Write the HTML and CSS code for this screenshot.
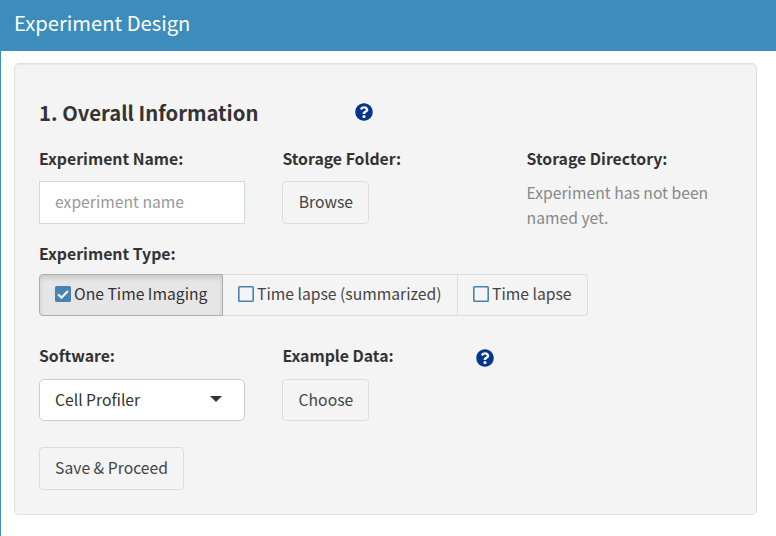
FILE: index.html
```html
<!DOCTYPE html>
<html lang="en">
<head>
<meta charset="utf-8">
<title>Experiment Design</title>
<link rel="stylesheet" href="styles.css">
</head>
<body>
<svg class="defs" aria-hidden="true">
  <symbol id="help" viewBox="0 0 512 512"><path d="M504 256c0 137-111 248-248 248S8 393 8 256 119 8 256 8s248 111 248 248zM262.700 90c-54.500 0-89.300 23-116.500 63.800-3.500 5.300-2.400 12.400 2.700 16.300l34.700 26.300c5.200 3.900 12.600 3 16.700-2.100 17.900-22.700 30.100-35.800 57.300-35.800 20.400 0 45.700 13.100 45.700 33 0 15-12.400 22.700-32.500 34C247.100 238.500 216 254.900 216 296v4c0 6.600 5.400 12 12 12h56c6.600 0 12-5.400 12-12v-1.300c0-28.500 83.200-29.600 83.200-106.700 0-58-60.200-102-116.500-102zM256 338c-25.400 0-46 20.600-46 46s20.600 46 46 46 46-20.600 46-46-20.600-46-46-46z"/></symbol>
</svg>
<div class="box">
  <header class="box-header"><h3>Experiment Design</h3></header>
  <main class="well">
    <div class="row title-row">
      <h4>1. Overall Information</h4>
      <svg class="help"><use href="#help"/></svg>
    </div>
    <div class="row row-name">
      <div>
        <label class="label" for="name">Experiment Name:</label>
        <input class="text-input" id="name" type="text" placeholder="experiment name">
      </div>
      <div>
        <div class="label">Storage Folder:</div>
        <button class="btn btn-short">Browse</button>
      </div>
      <div>
        <div class="label">Storage Directory:</div>
        <p class="hint">Experiment has not been<br>named yet.</p>
      </div>
    </div>
    <div class="row-type">
      <div class="label">Experiment Type:</div>
      <div class="btn-group">
        <button class="btn seg seg-one active"><svg class="check" viewBox="0 0 16 16"><rect width="16" height="16" rx="1.500" fill="#4682b4"/><path d="M3 8.200l3.500 3.400L13 5" fill="none" stroke="#eee" stroke-width="2.200"/></svg>One Time Imaging</button>
        <button class="btn seg seg-two"><svg class="check" viewBox="0 0 16 16"><rect x=".8" y=".8" width="14.400" height="14.400" rx=".8" fill="none" stroke="#4682b4" stroke-width="1.600"/></svg>Time lapse (summarized)</button>
        <button class="btn seg seg-three"><svg class="check" viewBox="0 0 16 16"><rect x=".8" y=".8" width="14.400" height="14.400" rx=".8" fill="none" stroke="#4682b4" stroke-width="1.600"/></svg>Time lapse</button>
      </div>
    </div>
    <div class="row row-software">
      <div>
        <div class="label">Software:</div>
        <button class="select">Cell Profiler<span class="caret"></span></button>
      </div>
      <div>
        <div class="label label-help"><span>Example Data:</span><svg class="help"><use href="#help"/></svg></div>
        <button class="btn btn-short">Choose</button>
      </div>
    </div>
    <button class="btn btn-save">Save &amp; Proceed</button>
  </main>
</div>
</body>
</html>
```
FILE: styles.css
```css
* { box-sizing: border-box; }
body {
  margin: 0;
  background: #fff;
  color: #333;
  font: 15.7px/24px "Source Sans Pro", "Noto Sans CJK SC", "Noto Sans", sans-serif;
}
h3, h4, p { margin: 0; }
button, input { font: inherit; margin: 0; }
.defs { display: none; }
.box { height: 536px; border-left: 1px solid #3c8dbc; overflow: hidden; }
.box-header { height: 51px; background: #3c8dbc; padding: 10px 13px; }
.box-header h3 { color: #fff; font-size: 20.2px; font-weight: 400; line-height: 26px; }
.well {
  width: 743px;
  height: 452px;
  margin: 12px 0 0 13px;
  padding: 34px 24px 0;
  background: #f4f4f4;
  border: 1px solid #e0e0e0;
  border-radius: 5px;
  box-shadow: inset 0 1px 1px rgba(0, 0, 0, .05);
}
.row { display: grid; grid-template-columns: 243.400px 244.200px 1fr; }
.title-row { height: 49px; grid-template-columns: 315.500px 1fr; }
h4 { font-size: 20.25px; font-weight: 700; line-height: 30px; }
.help { width: 18px; height: 18px; fill: #05358c; }
.title-row .help { margin-top: 5px; }
.label { display: block; height: 34px; font-size: 15.8px; font-weight: 700; line-height: 24px; }
.row-name { height: 95px; }
.text-input {
  display: block;
  width: 206px;
  height: 43px;
  padding: 0 15px 3px;
  border: 1px solid #d2d6de;
  background: #fff;
}
.text-input::placeholder { color: #999; opacity: 1; }
.btn {
  display: block;
  height: 43px;
  padding: 0 0 1px;
  border: 1px solid #ddd;
  border-radius: 4px;
  background: #f4f4f4;
  color: #444;
  white-space: nowrap;
}
.btn-short { width: 87px; }
.hint { margin-top: -1px; color: #888; line-height: 25px; }
.row-type { height: 102px; }
.row-type .label { height: 32px; }
.btn-group { display: flex; }
.seg { display: flex; align-items: center; height: 42px; padding: 0 0 3px 15px; border-radius: 0; }
.seg-one { width: 184px; border-radius: 4px 0 0 4px; }
.seg-two { width: 235px; border-left: 0; }
.seg-three { width: 130px; border-left: 0; border-radius: 0 4px 4px 0; }
.active { color: #333; background: #e6e6e6; border-color: #adadad; box-shadow: inset 0 3px 5px rgba(0, 0, 0, .125); }
.check { width: 16px; height: 16px; margin: 0 3px 0 0; flex: none; }
.row-software { height: 103px; }
.row-software .label { height: 35px; }
.row-software .btn { height: 42px; }
.label-help { display: flex; justify-content: space-between; width: 212px; }
.label-help .help { margin-top: 5px; }
.select {
  display: flex;
  align-items: center;
  justify-content: space-between;
  width: 206px;
  height: 42px;
  padding: 0 22px 0 15px;
  border: 1px solid #ccc;
  border-radius: 5px;
  background: #fff;
  color: #333;
}
.caret { border: 6px solid transparent; border-top-color: #333; border-bottom: 0; margin-bottom: 3px; }
.btn-save { width: 145px; }
```
